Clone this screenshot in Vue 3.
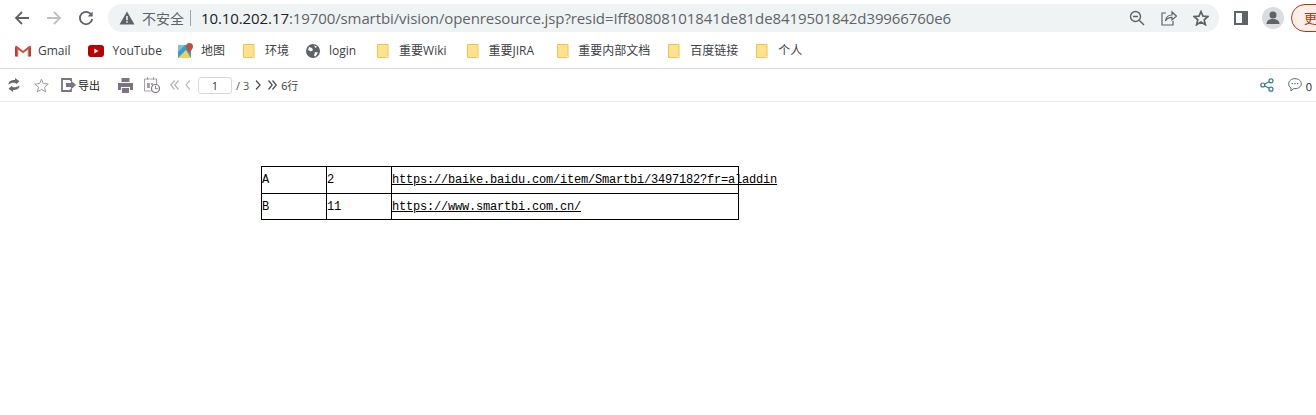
<script setup>
const bookmarks = [
  { label: 'Gmail', icon: 'gmail', gap: 17, inset: 7 },
  { label: 'YouTube', icon: 'yt', gap: 16, inset: 9 },
  { label: '地图', icon: 'map', gap: 18, inset: 7 },
  { label: '环境', icon: 'folder', gap: 17, inset: 10 },
  { label: 'login', icon: 'globe', gap: 21, inset: 9 },
  { label: '重要Wiki', icon: 'folder', gap: 20, inset: 10 },
  { label: '重要JIRA', icon: 'folder', gap: 23, inset: 10 },
  { label: '重要内部文档', icon: 'folder', gap: 18, inset: 9 },
  { label: '百度链接', icon: 'folder', gap: 18, inset: 10 },
  { label: '个人', icon: 'folder', gap: 0, inset: 10 }
]
const rows = [
  { a: 'A', b: '2', url: 'https://baike.baidu.com/item/Smartbi/3497182?fr=aladdin' },
  { a: 'B', b: '11', url: 'https://www.smartbi.com.cn/' }
]
</script>

<template>
  <div class="page">
    <div class="chrome">
      <div class="nav">
        <svg class="nav-ico" viewBox="0 0 16 16" width="16" height="16"><path d="M15 8H2.500M8 2L2 8l6 6" fill="none" stroke="#5f6368" stroke-width="1.800"/></svg>
        <svg class="nav-ico" viewBox="0 0 16 16" width="16" height="16"><path d="M1 8h12.500M8 2l6 6-6 6" fill="none" stroke="#bdc1c6" stroke-width="1.800"/></svg>
        <svg class="nav-ico" viewBox="0 0 16 16" width="16" height="16"><path d="M13.600 5.200A6.200 6.200 0 1 0 14.200 9" fill="none" stroke="#5f6368" stroke-width="1.800"/><path d="M14.600 1.600v5h-5z" fill="#5f6368"/></svg>
      </div>
      <div class="omnibox">
        <svg class="warn" viewBox="0 0 16 14" width="16" height="14"><path d="M8 .5L15.500 13.500H.5z" fill="#5f6368"/><path d="M7.200 5h1.600v4.200H7.200zM7.200 10.200h1.600v1.600H7.200z" fill="#f0f3f4"/></svg>
        <span class="insecure">不安全</span>
        <span class="sep"></span>
        <span class="url"><b>10.10.202.17</b>:19700/smartbi/vision/openresource.jsp?resid=Iff80808101841de81de8419501842d39966760e6</span>
        <div class="omni-icons">
          <svg viewBox="0 0 16 16" width="16" height="16"><circle cx="6.500" cy="6.500" r="5" fill="none" stroke="#5f6368" stroke-width="1.400"/><path d="M4 6.500h5M10.200 10.200L15 15" fill="none" stroke="#5f6368" stroke-width="1.500"/></svg>
          <svg viewBox="0 0 16 16" width="16" height="16"><path d="M5 3H1v12h11v-4" fill="none" stroke="#5f6368" stroke-width="1.200"/><path d="M4.500 11c.5-4 3.500-6 6.500-6V2l4.500 4.200L11 10V7.400c-2.500 0-5 1-6.500 3.600z" fill="none" stroke="#5f6368" stroke-width="1.200"/></svg>
          <svg viewBox="0 0 16 16" width="16" height="16"><path d="M8 1.500l2 4.600 5 .4-3.800 3.300 1.200 4.900L8 12.100l-4.400 2.600 1.200-4.900L1 6.500l5-.4z" fill="none" stroke="#5f6368" stroke-width="1.700"/></svg>
        </div>
      </div>
      <div class="chrome-right">
        <svg class="side" viewBox="0 0 14 14" width="14" height="14"><path d="M0 0h14v14H0z" fill="#5f6368"/><path d="M2 2h6v10H2z" fill="#fff"/></svg>
        <span class="avatar">
          <svg viewBox="0 0 22 22" width="22" height="22"><circle cx="11" cy="11" r="11" fill="#dadce0"/><circle cx="11" cy="8" r="3.500" fill="#5f6368"/><path d="M4.500 17c0-3.500 3-5 6.500-5s6.500 1.500 6.500 5z" fill="#5f6368"/></svg>
        </span>
        <span class="update">更</span>
      </div>
    </div>

    <div class="bookmarks">
      <div v-for="b in bookmarks" :key="b.label" class="bm" :style="{ marginRight: b.gap + 'px' }">
        <svg v-if="b.icon === 'gmail'" viewBox="0 0 16 12" width="16" height="12"><path d="M1 1v10.500h2.500V5L8 8.500 12.500 5v6.500H15V1h-1L8 5.800 2 1z" fill="#b8b4b0"/><path d="M0 1.500V11.500h2.500V4z" fill="#c5392b"/><path d="M16 1.500V11.500h-2.500V4z" fill="#c5392b"/><path d="M1 .5L8 6l7-5.500 1 1.500-8 6-8-6z" fill="#d04a3a"/></svg>
        <svg v-else-if="b.icon === 'yt'" viewBox="0 0 16 12" width="16" height="12"><rect width="16" height="12" rx="3" fill="#b80000"/><path d="M6.300 3.500v5L10.500 6z" fill="#fff"/></svg>
        <svg v-else-if="b.icon === 'map'" viewBox="0 0 16 16" width="16" height="16"><path d="M0 2h13v13H0z" fill="#3a9ad0"/><path d="M0 15L8 7l5 8z" fill="#f2cf5b"/><path d="M0 2h7L0 9z" fill="#7cc0dc"/><path d="M11.500 0a3.500 3.500 0 0 1 3.500 3.500c0 2.500-3.500 6-3.500 6S8 6 8 3.500A3.500 3.500 0 0 1 11.500 0z" fill="#b5533c"/></svg>
        <svg v-else-if="b.icon === 'globe'" viewBox="0 0 14 14" width="14" height="14"><circle cx="7" cy="7" r="7" fill="#5f6368"/><path d="M3 3l3 1 1 2-2 1.500L2 6zM9 8l3 .5-2.500 4-1.500-1zM8 1.500l3 1-1.500 1.500z" fill="#fff"/></svg>
        <svg v-else viewBox="0 0 12 14" width="12" height="14"><path d="M.5.500h10.500v13H.5z" fill="#fde293" stroke="#f5c344"/><path d="M9 11h2v2.500H9z" fill="#fff" stroke="#f5c344" stroke-width=".6"/></svg>
        <span class="bm-label" :style="{ marginLeft: b.inset + 'px' }">{{ b.label }}</span>
      </div>
    </div>

    <div class="toolbar">
      <div class="tools">
        <svg class="t-refresh" viewBox="0 0 12 14" width="12" height="14"><path d="M.5 6.500C.5 3 3.500 2 7 2V0l4.500 3.200L8.500 6 7 4.800C4.500 4.500 2.500 5 .5 6.500zM11.500 7.500c0 3.500-3 4.500-6.500 4.500v2L.5 10.800 3.500 8 5 9.200c2.500.3 4.500-.2 6.500-1.700z" fill="#6b6570"/></svg>
        <svg class="t-star" viewBox="0 0 16 16" width="15" height="15"><path d="M8 1.200l2 4.800 5.200.4-4 3.400 1.300 5L8 12.100l-4.500 2.700 1.300-5-4-3.400L6 6z" fill="none" stroke="#97939b" stroke-width="1"/></svg>
        <svg class="t-export" viewBox="0 0 15 14" width="15" height="14"><path d="M10 3V1H1v12h9v-2" fill="none" stroke="#7c7480" stroke-width="1.800"/><path d="M5 5h5V2.500L15 7l-5 4.500V9H5z" fill="#7c7480"/></svg>
        <span class="export-label">导出</span>
        <svg class="t-print" viewBox="0 0 15 15" width="15" height="15"><path d="M3.500 0h8v4h-8zM0 5h15v7h-3V9H3v3H0zM4 10h7v5H4z" fill="#7c7480"/></svg>
        <svg class="t-sched" viewBox="0 0 16 16" width="16" height="16"><path d="M.5 2h12v12H.5z" fill="none" stroke="#a6a2a8"/><path d="M3 6h3v5H3zM7 6h2v2H7z" fill="#a6a2a8"/><path d="M3 0h1v3H3zM9 0h1v3H9z" fill="#a6a2a8"/><circle cx="11.500" cy="11.500" r="4" fill="#fff" stroke="#7c7480" stroke-width="1.200"/><path d="M11.500 9v2.700h2.200" fill="none" stroke="#7c7480"/></svg>
        <svg class="t-first" viewBox="0 0 9 10" width="9" height="10"><path d="M4.500 .5L.8 5l3.700 4.500M8.500 .5L4.800 5l3.700 4.500" fill="none" stroke="#b5b3b8" stroke-width="1.200"/></svg>
        <svg class="t-prev" viewBox="0 0 6 10" width="6" height="10"><path d="M5 .5L1 5l4 4.500" fill="none" stroke="#b5c0c0" stroke-width="1.200"/></svg>
        <input class="page-input" value="1" readonly />
        <span class="total">/ 3</span>
        <svg class="t-next" viewBox="0 0 6 10" width="6" height="10"><path d="M1 .5L5 5 1 9.500" fill="none" stroke="#4a4a55" stroke-width="1.200"/></svg>
        <svg class="t-last" viewBox="0 0 9 10" width="9" height="10"><path d="M.5 .5L4.200 5 .5 9.500M4.500 .5L8.200 5 4.500 9.500" fill="none" stroke="#4a4a55" stroke-width="1.200"/></svg>
        <span class="rows">6行</span>
      </div>
      <div class="tools-right">
        <svg viewBox="0 0 14 14" width="14" height="14"><circle cx="11" cy="2.800" r="2" fill="none" stroke="#2f7f86" stroke-width="1.200"/><circle cx="2.800" cy="7" r="2" fill="none" stroke="#2f7f86" stroke-width="1.200"/><circle cx="11" cy="11.200" r="2" fill="none" stroke="#2f7f86" stroke-width="1.200"/><path d="M4.600 6l4.600-2.300M4.600 8l4.600 2.300" stroke="#2f7f86" stroke-width="1.200"/></svg>
        <span class="comment">
          <svg viewBox="0 0 14 14" width="14" height="14"><path d="M7 .7c3.400 0 6.300 2.100 6.300 5s-2.900 5-6.300 5H5.500L3 13v-3C1.500 9.100.7 7.500.7 5.700c0-2.900 2.900-5 6.300-5z" fill="none" stroke="#4a6a78"/><path d="M3.700 5h1.200v1.200H3.700zM6.400 5h1.200v1.200H6.400zM9.100 5h1.200v1.200H9.100z" fill="#4a6a78"/></svg>
          <span class="count">0</span>
        </span>
      </div>
    </div>

    <div class="content">
      <table class="report">
        <colgroup><col class="c1" /><col class="c2" /><col class="c3" /></colgroup>
        <tbody>
          <tr v-for="r in rows" :key="r.a">
            <td>{{ r.a }}</td>
            <td>{{ r.b }}</td>
            <td><a class="link">{{ r.url }}</a></td>
          </tr>
        </tbody>
      </table>
    </div>
  </div>
</template>

<style>
html, body { margin: 0; background: #fff; overflow: hidden; }
</style>

<style scoped>
.page { width: 1316px; height: 415px; overflow: hidden; font-family: "Noto Sans CJK SC", "Noto Sans", sans-serif; background: #fff; }
.chrome { display: flex; align-items: center; height: 36px; box-sizing: border-box; }
.nav { display: flex; align-items: center; gap: 16px; padding-left: 14px; width: 94px; flex: none; }
.omnibox { display: flex; align-items: center; width: 1111px; height: 28px; border-radius: 14px; background: #f0f3f4; flex: none; box-sizing: border-box; padding-left: 11px; }
.warn { flex: none; }
.insecure { margin-left: 7px; font-size: 14px; color: #5f6368; }
.sep { width: 1px; height: 16px; background: #9aa0a6; margin: 0 10px 0 6px; }
.url { font-family: "Open Sans", "Noto Sans", sans-serif; font-size: 15px; letter-spacing: -0.095px; color: #5f6368; white-space: nowrap; }
.url b { font-weight: 400; color: #202124; }
.omni-icons { margin-left: auto; display: flex; gap: 16px; padding-right: 10px; align-items: center; }
.chrome-right { display: flex; align-items: center; flex: none; }
.side { margin-left: 15px; }
.avatar { display: block; height: 22px; margin-left: 14px; }
.update { width: 60px; height: 28px; margin-left: 7px; border: 1px solid #b8360c; border-radius: 14px; background: #fdeee9; color: #b8360c; font-size: 13px; line-height: 26px; padding-left: 12px; box-sizing: border-box; flex: none; }
.bookmarks { display: flex; align-items: center; height: 29px; padding: 0 0 3px 15px; border-bottom: 1px solid #dfdfdf; }
.bm { display: flex; align-items: center; font-size: 12px; color: #3c4043; white-space: nowrap; }
.bm-label { line-height: 16px; font-family: "Open Sans", "Noto Sans CJK SC", sans-serif; }
.toolbar { display: flex; align-items: center; justify-content: space-between; height: 32px; border-bottom: 1px solid #ededed; }
.tools { display: flex; align-items: center; padding-left: 8px; font-size: 11px; color: #333; }
.t-star { margin-left: 14px; }
.t-export { margin-left: 12px; }
.export-label { margin-left: 2px; font-size: 11px; color: #222; }
.t-print { margin-left: 18px; }
.t-sched { margin-left: 11px; }
.t-first { margin-left: 10px; }
.t-prev { margin-left: 6px; }
.page-input { width: 34px; height: 17px; margin-left: 7px; padding: 0; border: 1px solid #d8d8d8; border-radius: 3px; text-align: center; font: 11px "Open Sans", sans-serif; color: #333; box-sizing: border-box; background: #fff; outline: none; }
.total { margin-left: 4px; font-family: "Open Sans", sans-serif; color: #555; }
.t-next { margin-left: 6px; }
.t-last { margin-left: 7px; }
.rows { margin-left: 4px; font-size: 11px; color: #444; }
.tools-right { display: flex; align-items: center; gap: 14px; padding-right: 4px; }
.comment { display: flex; align-items: center; gap: 4px; font: 11px "Open Sans", sans-serif; color: #222; }
.count { position: relative; top: 1px; }
.content { padding: 64px 0 0 261px; }
.report { border-collapse: collapse; table-layout: fixed; width: 478px; }
.c1, .c2 { width: 65px; }
.report td { height: 27px; padding: 6px 0 0; border: 1px solid #000; box-sizing: border-box; font: 12px/14px "Liberation Mono", monospace; letter-spacing: -0.2px; color: #000; white-space: nowrap; overflow: visible; vertical-align: top; }
.report tr:last-child td { height: 26px; }
.link { text-decoration: underline; color: #000; }
</style>
